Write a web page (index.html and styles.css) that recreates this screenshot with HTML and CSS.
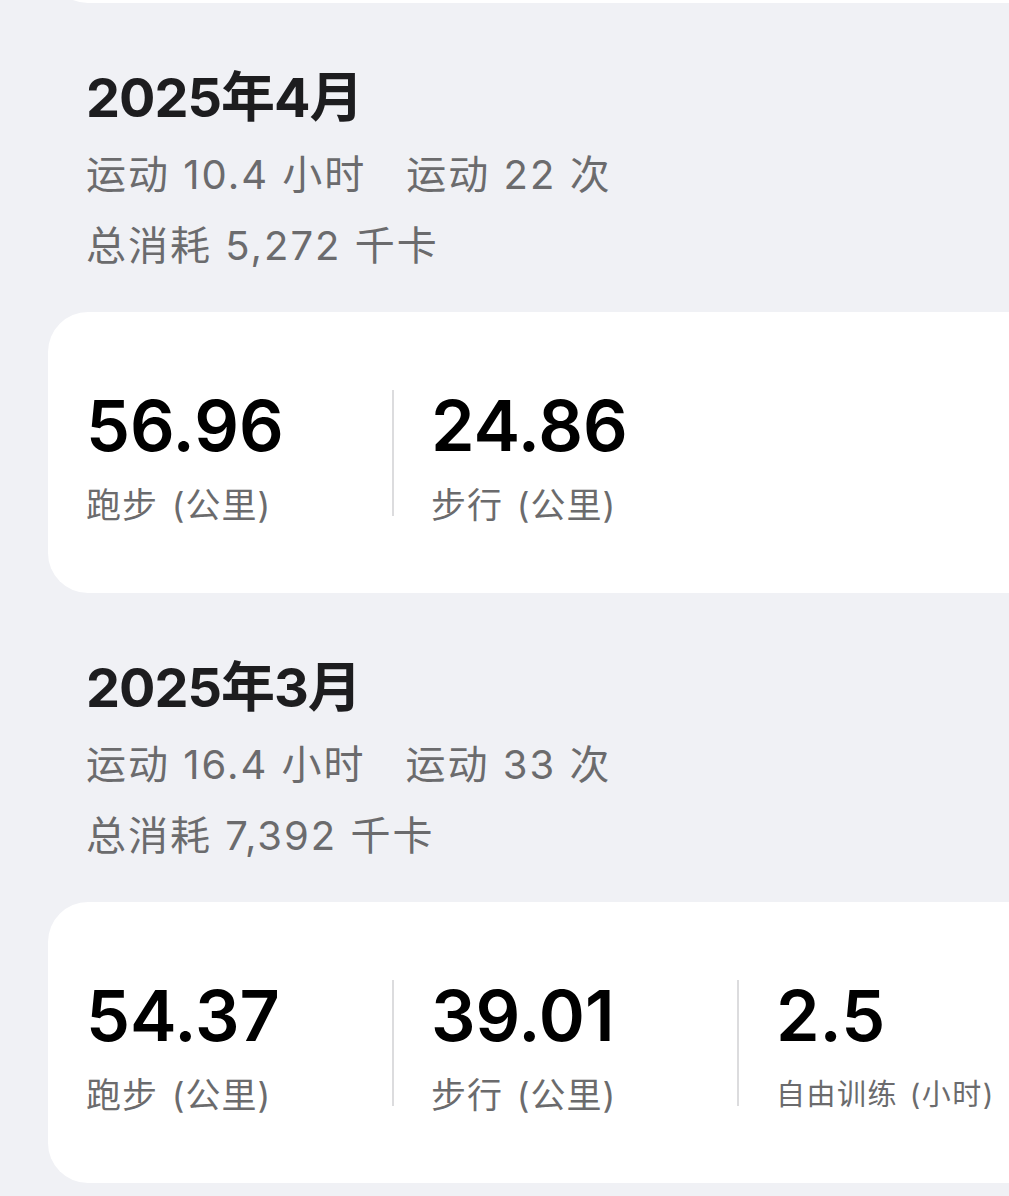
FILE: index.html
```html
<!DOCTYPE html>
<html lang="zh-CN">
<head>
    <meta charset="UTF-8">
    <meta name="viewport" content="width=device-width, initial-scale=1.0">
    <title>运动记录</title>
    <link rel="stylesheet" href="styles.css">
</head>
<body>
    <div class="page">
        <div class="card card-prev"></div>

        <section class="month">
            <h2 class="month-title">2025年4月</h2>
            <div class="summary">
                <span>运动 10.4 小时</span>
                <span>运动 22 次</span>
            </div>
            <div class="summary">
                <span>总消耗 5,272 千卡</span>
            </div>
            <div class="card">
                <div class="stats">
                    <div class="stat">
                        <div class="stat-value">56.96</div>
                        <div class="stat-label">跑步 (公里)</div>
                    </div>
                    <div class="sep"></div>
                    <div class="stat">
                        <div class="stat-value">24.86</div>
                        <div class="stat-label">步行 (公里)</div>
                    </div>
                </div>
            </div>
        </section>

        <section class="month">
            <h2 class="month-title">2025年3月</h2>
            <div class="summary">
                <span>运动 16.4 小时</span>
                <span>运动 33 次</span>
            </div>
            <div class="summary">
                <span>总消耗 7,392 千卡</span>
            </div>
            <div class="card">
                <div class="stats">
                    <div class="stat">
                        <div class="stat-value">54.37</div>
                        <div class="stat-label">跑步 (公里)</div>
                    </div>
                    <div class="sep"></div>
                    <div class="stat">
                        <div class="stat-value">39.01</div>
                        <div class="stat-label">步行 (公里)</div>
                    </div>
                    <div class="sep"></div>
                    <div class="stat">
                        <div class="stat-value">2.5</div>
                        <div class="stat-label stat-label-small">自由训练 (小时)</div>
                    </div>
                </div>
            </div>
        </section>
    </div>
</body>
</html>
```

FILE: styles.css
```css
body {
    margin: 0;
    padding: 0;
    background-color: #f0f1f5;
    font-family: 'Inter', 'Noto Sans CJK SC', sans-serif;
    overflow: hidden;
}

.page {
    padding-left: 48px;
}

.card {
    background: #ffffff;
    border-radius: 40px;
    width: 1040px;
    height: 281px;
    box-sizing: border-box;
    padding: 78px 0 0 38px;
}

/* bottom of the card above, mostly scrolled off */
.card-prev {
    height: 100px;
    margin-top: -97px;
    padding: 0;
}

.month-title {
    margin: 63px 0 0 38px;
    font-size: 54px;
    line-height: 64px;
    font-weight: 700;
    letter-spacing: -1px;
    color: #1d1d1f;
}

.summary {
    margin-left: 38px;
    display: flex;
    gap: 40px;
    font-size: 40px;
    line-height: 71px;
    letter-spacing: 2px;
    color: #6b6b6d;
}

.month-title + .summary {
    margin-top: 9px;
}

.summary + .card {
    margin-top: 31px;
}

.stats {
    display: flex;
    align-items: flex-start;
}

.stat {
    width: 306px;
    flex-shrink: 0;
}

.stat-value {
    font-size: 70px;
    line-height: 72px;
    font-weight: 600;
    color: #000;
}

.stat-label {
    margin-top: 22px;
    font-size: 35px;
    line-height: 42px;
    letter-spacing: 1px;
    word-spacing: 3px;
    color: #6b6b6d;
    white-space: nowrap;
}

.stat-label-small {
    font-size: 29px;
    letter-spacing: 1.5px;
    word-spacing: 2px;
}

.sep {
    width: 2px;
    height: 126px;
    background: #dcdcde;
    margin-right: 37px;
    flex-shrink: 0;
}
```
